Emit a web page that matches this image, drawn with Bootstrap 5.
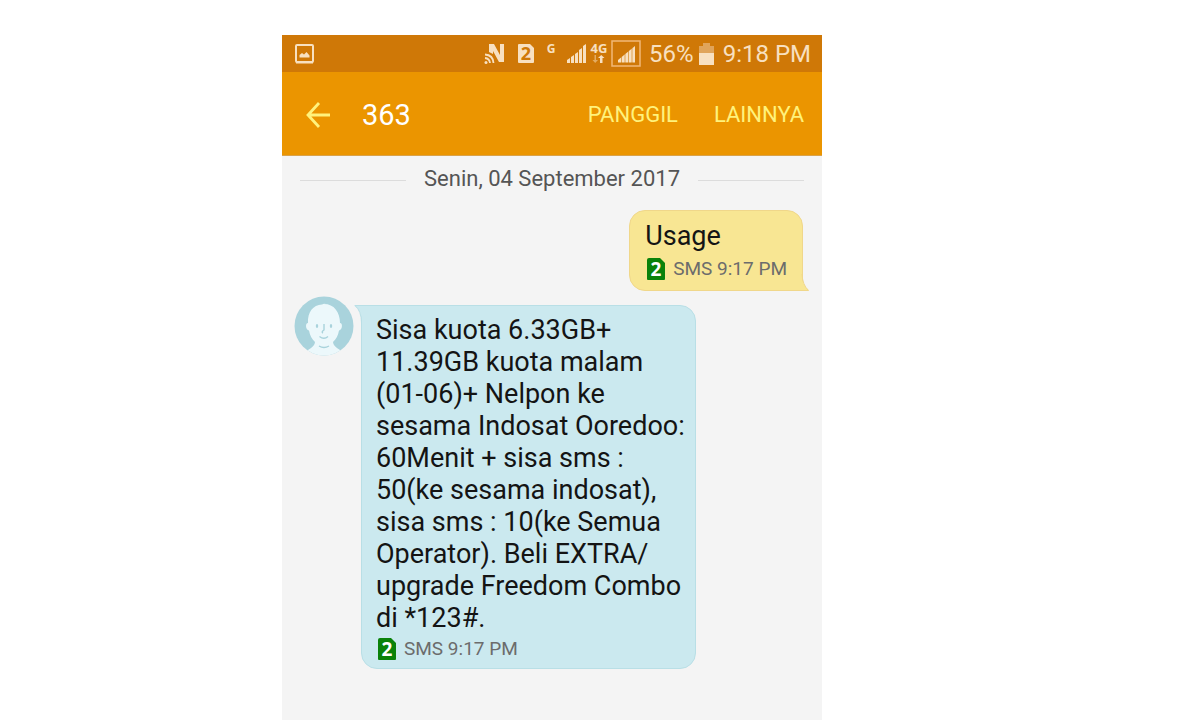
<!DOCTYPE html>
<html lang="id">
<head>
<meta charset="utf-8">
<meta name="viewport" content="width=device-width, initial-scale=1">
<title>363</title>
<link href="https://cdn.jsdelivr.net/npm/bootstrap@5.3.0/dist/css/bootstrap.min.css" rel="stylesheet">
<style>
body { font-family: Roboto, "Liberation Sans", sans-serif; background: #fff; }
.phone { width: 45%; margin-left: 23.5%; margin-top: 35px; min-height: calc(100vh - 35px); background: #f4f4f4; }
.statusbar { background: #cf7807; color: #f8e0c0; font-size: 24px; line-height: 36px; padding: 1px 11px 0 13px; }
.appbar { height: 84px; background: #eb9500; border-bottom: 1px solid #d9a24a; padding: 3px 18px 0 24px; }
.appbar h1 { font-size: 29px; line-height: 32px; color: #fff; margin-left: 31px; font-weight: 400; }
.appbar button { color: #fff27c; }
.actions { gap: 36px; }
.action { font-size: 22px; line-height: 32px; }
.date-row { padding: 7px 18px 0; gap: 18px; font-size: 22px; line-height: 32px; color: #555; }
.rule { height: 1px; background: #dcdcdc; margin-top: 3px; }
.bubble { border: 1px solid; border-radius: 16px; font-size: 27px; line-height: 32px; color: #141414; position: relative; }
.sent { background: #f8e693; border-color: #f0d78a; border-bottom-right-radius: 0; padding: 9px 15px; margin: 15px 19px 0 0; }
.received { background: #cbe9ef; border-color: #b9dfe6; border-top-left-radius: 0; padding: 8px 14px 7px; margin: 14px 0 0 7px; width: 335px; }
.received .body-text { white-space: nowrap; }
.meta { font-size: 19px; line-height: 24px; color: #6c6c6c; gap: 7px; }
.meta svg { margin-left: 2px; overflow: visible; }
.sent .meta { margin-top: 5px; }
.received .meta { margin-top: 3px; }
.incoming { padding: 0 12px 48px; }
.avatar { margin-top: 5px; }
.tail { position: absolute; }
.sent .tail { right: -7px; bottom: -1px; }
.received .tail { left: -8px; top: -1px; }
.glyph { font-family: "Open Sans", sans-serif; font-weight: 700; }
</style>
</head>
<body>
<main class="phone d-flex flex-column">
  <div class="statusbar d-flex align-items-center">
    <svg width="19" height="20" viewBox="0 0 19 20" aria-hidden="true"><rect x="1" y="1" width="17" height="17" rx="1" fill="none" stroke="#f8e0c0" stroke-width="2"/><path d="M1 18.500H18" stroke="#f8e0c0" stroke-width="2"/><path d="M4.500 13.500V11L7 9L9 10.500L11.500 8L14.500 11.500V13.500Z" fill="#f8e0c0"/></svg>
    <svg class="ms-auto" width="157" height="30" viewBox="0 0 157 30" fill="#f8e0c0" aria-hidden="true">
      <path d="M5 5H10L16 16V5H20V23H15L9 12V15L5 13Z"/>
      <g fill="none" stroke="#f8e0c0" stroke-width="1.800"><path d="M1 15.500Q9 16 9.500 24M1 19Q5.500 19.500 6 24"/></g><circle cx="2" cy="23.500" r="1.500"/>
      <path d="M35 5H46L50 9V23Q50 24 49 24H35Q34 24 34 23V6Q34 5 35 5Z"/>
      <text class="glyph" x="42" y="21" font-size="18" text-anchor="middle" fill="#cf7807">2</text>
      <text class="glyph" x="67" y="14" font-size="12" text-anchor="middle">G</text>
      <path d="M83 24V21L86 19V24ZM87 24V18L90 16V24ZM91 24V15L94 13V24ZM95 24V11L98 9V24ZM99 24V7L102 5V24Z"/>
      <text class="glyph" x="115" y="14" font-size="13" text-anchor="middle">4G</text>
      <path d="M116 24V19H114L117.200 16L120.500 19H118.500V24Z"/><path d="M110.500 16H112V21H114L111.200 24L108.500 21H110.500Z" opacity=".5"/>
      <rect x="128" y="2" width="28" height="25" fill="none" stroke="#f2b878" stroke-width="1.500"/>
      <path d="M134 23.500V21L151 7V23.500Z"/><path d="M137.500 18V24M141 15V24M144.500 12V24M148 9V24" stroke="#cf7807" stroke-width=".6"/>
    </svg>
    <span class="ms-2">56%</span>
    <svg class="ms-1" width="17" height="24" viewBox="0 0 17 24" aria-hidden="true"><path d="M1 4H5V1H12V4H16V11H1Z" fill="#e0a45a"/><path d="M1 11H16V23H1Z" fill="#f8e0c0"/></svg>
    <span class="ms-2">9:18 PM</span>
  </div>
  <header class="appbar d-flex align-items-center">
    <button class="btn p-0 border-0 d-flex" type="button" aria-label="Kembali"><svg width="25" height="26" viewBox="0 0 25 26" fill="none" stroke="currentColor" stroke-width="2.800"><path d="M13 1L2 13L13 25M2 13H24"/></svg></button>
    <h1 class="mb-0">363</h1>
    <div class="actions d-flex ms-auto">
      <button class="btn p-0 border-0 action" type="button">PANGGIL</button>
      <button class="btn p-0 border-0 action" type="button">LAINNYA</button>
    </div>
  </header>
  <div class="date-row d-flex align-items-center">
    <span class="rule flex-fill"></span><span>Senin, 04 September 2017</span><span class="rule flex-fill"></span>
  </div>
  <div class="d-flex justify-content-end">
    <article class="bubble sent">
      <svg class="tail" width="8" height="18" viewBox="0 0 8 18" aria-hidden="true"><path d="M0 0Q1 12 8 17.500H0Z" fill="#f8e693"/><path d="M1 1Q1.500 12 7.500 17.500H0" fill="none" stroke="#f0d78a"/></svg>
      <div>Usage</div>
      <div class="meta d-flex align-items-center"><svg width="19" height="23" viewBox="0 0 19 23"><path d="M2 0H13L18 5V21Q18 22 17 22H1Q0 22 0 21V2Q0 0 2 0Z" fill="#0a820a"/><text class="glyph" x="9" y="18" font-size="19" text-anchor="middle" fill="#fff">2</text></svg><span>SMS 9:17 PM</span></div>
    </article>
  </div>
  <div class="incoming d-flex align-items-start">
    <svg class="avatar flex-shrink-0" width="60" height="60" viewBox="0 0 60 60" aria-hidden="true">
      <defs><clipPath id="av"><circle cx="30" cy="30" r="29.500"/></clipPath></defs>
      <circle cx="30" cy="30" r="29.500" fill="#a9d3dc"/>
      <g clip-path="url(#av)"><path d="M30 8C40 8 46 16 46 27C49 27 48.500 34 45 34.500C44 40 42 43 39 46Q39 50 46 54V60H14V54Q21 50 21 46C18 43 16 40 15 34.500C11.500 34 11 27 14 27C13.500 16 19 9 28 8.500L32 7Z" fill="#ecf8fb"/></g>
      <g fill="none" stroke="#a9d3dc" stroke-width="1.400"><path d="M30 28V34Q27 36 29 37M25.500 40.500Q30 44 34 40.500M25 50Q30 53 35 50"/></g>
      <ellipse cx="23" cy="30" rx="1.200" ry="2" fill="#a9d3dc"/><ellipse cx="37" cy="30" rx="1.200" ry="2" fill="#a9d3dc"/>
    </svg>
    <article class="bubble received">
      <svg class="tail" width="9" height="18" viewBox="0 0 9 18" aria-hidden="true"><path d="M0 .5H9V18H8Q8 6 0 .5Z" fill="#cbe9ef"/><path d="M9 .5H1Q7.500 6 7.500 18" fill="none" stroke="#b9dfe6"/></svg>
      <div class="body-text">Sisa kuota 6.33GB+<br>11.39GB kuota malam<br>(01-06)+ Nelpon ke<br>sesama Indosat Ooredoo:<br>60Menit + sisa sms :<br>50(ke sesama indosat),<br>sisa sms : 10(ke Semua<br>Operator). Beli EXTRA/<br>upgrade Freedom Combo<br>di *123#.</div>
      <div class="meta d-flex align-items-center"><svg width="19" height="23" viewBox="0 0 19 23"><path d="M2 0H13L18 5V21Q18 22 17 22H1Q0 22 0 21V2Q0 0 2 0Z" fill="#0a820a"/><text class="glyph" x="9" y="18" font-size="19" text-anchor="middle" fill="#fff">2</text></svg><span>SMS 9:17 PM</span></div>
    </article>
  </div>
</main>
<script src="https://cdn.jsdelivr.net/npm/bootstrap@5.3.0/dist/js/bootstrap.bundle.min.js"></script>
</body>
</html>
